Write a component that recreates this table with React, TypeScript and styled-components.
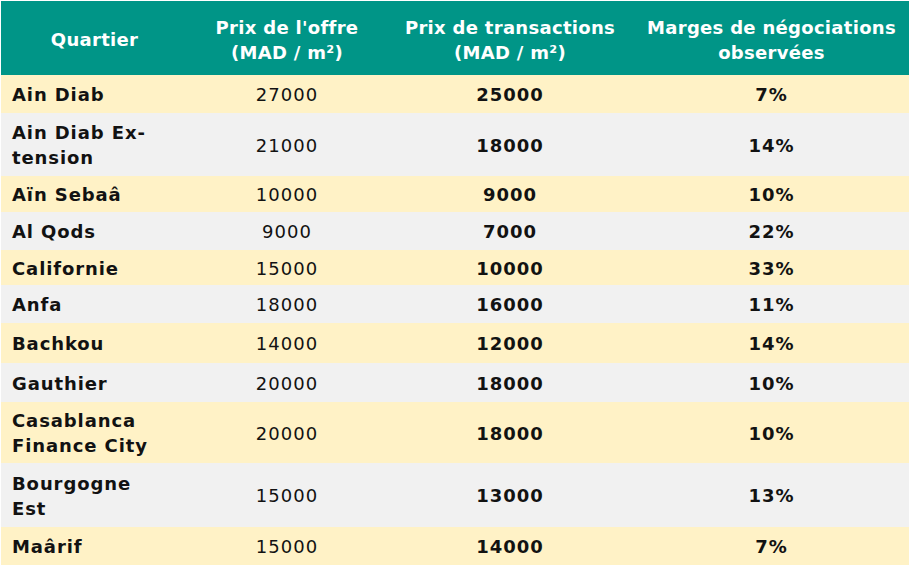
import React from "react";
import styled, { createGlobalStyle } from "styled-components";

const Global = createGlobalStyle`
  html, body { margin: 0; padding: 0; background: #ffffff; }
  body { font-family: "DejaVu Sans", Lato, sans-serif; }
`;

const Wrap = styled.div`
  padding: 1px 2px 2px 1px;
  width: 908px;
`;

const Table = styled.table`
  width: 908px;
  border-collapse: collapse;
  table-layout: fixed;
  color: #121212;
`;

const HeadCell = styled.th<{ $w: number }>`
  width: ${(p) => p.$w}px;
  background: #009587;
  color: #ffffff;
  font-weight: 700;
  font-size: 18px;
  line-height: 25px;
  letter-spacing: 0.3px;
  text-align: center;
  height: 74px;
  padding: 3px 2px 0;
  box-sizing: border-box;
`;

const Row = styled.tr<{ $alt: boolean }>`
  background: ${(p) => (p.$alt ? "#f1f1f1" : "#fff2c6")};
`;

const NameCell = styled.td<{ $h: number }>`
  height: ${(p) => p.$h}px;
  padding: 1px 0 0 11px;
  font-weight: 700;
  font-size: 18px;
  line-height: 25px;
  letter-spacing: 0.9px;
  text-align: left;
  white-space: nowrap;
  box-sizing: border-box;
`;

const NumCell = styled.td<{ $bold?: boolean }>`
  font-weight: ${(p) => (p.$bold ? 700 : 400)};
  font-size: 18px;
  letter-spacing: 1px;
  text-align: center;
  padding: 1px 0 0;
`;

const rows: [React.ReactNode, string, string, string, number][] = [
  ["Ain Diab", "27000", "25000", "7%", 38],
  [<>Ain Diab Ex-<br />tension</>, "21000", "18000", "14%", 63],
  ["Aïn Sebaâ", "10000", "9000", "10%", 36],
  ["Al Qods", "9000", "7000", "22%", 38],
  ["Californie", "15000", "10000", "33%", 35],
  ["Anfa", "18000", "16000", "11%", 38],
  ["Bachkou", "14000", "12000", "14%", 40],
  ["Gauthier", "20000", "18000", "10%", 39],
  [<>Casablanca<br />Finance City</>, "20000", "18000", "10%", 61],
  [<>Bourgogne<br />Est</>, "15000", "13000", "13%", 64],
  ["Maârif", "15000", "14000", "7%", 38],
];

export default function App() {
  return (
    <Wrap>
      <Global />
      <Table>
        <thead>
          <tr>
            <HeadCell $w={187}>Quartier</HeadCell>
            <HeadCell $w={198}>
              Prix de l'offre
              <br />
              (MAD / m²)
            </HeadCell>
            <HeadCell $w={248}>
              Prix de transactions
              <br />
              (MAD / m²)
            </HeadCell>
            <HeadCell $w={275}>
              Marges de négociations
              <br />
              observées
            </HeadCell>
          </tr>
        </thead>
        <tbody>
          {rows.map(([name, offre, trans, marge, h], i) => (
            <Row key={i} $alt={i % 2 === 1}>
              <NameCell $h={h}>{name}</NameCell>
              <NumCell>{offre}</NumCell>
              <NumCell $bold>{trans}</NumCell>
              <NumCell $bold>{marge}</NumCell>
            </Row>
          ))}
        </tbody>
      </Table>
    </Wrap>
  );
}
